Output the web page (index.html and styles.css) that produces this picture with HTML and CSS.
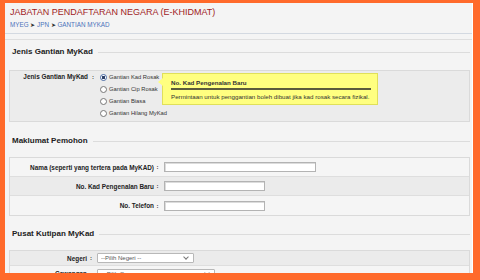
FILE: index.html
```html
<!DOCTYPE html>
<html lang="ms">
<head>
  <meta charset="UTF-8">
  <meta name="viewport" content="width=device-width, initial-scale=1.0">
  <title>Gantian MyKad - JPN</title>
  <link rel="stylesheet" href="styles.css">
</head>
<body>
  <div class="page">
    <div class="header">
      <h1 class="title">JABATAN PENDAFTARAN NEGARA (E-KHIDMAT)</h1>
      <div class="crumbs">
        <a href="#">MYEG</a> <span class="sep">&#10148;</span>
        <a href="#">JPN</a> <span class="sep">&#10148;</span>
        <a href="#">GANTIAN MYKAD</a>
      </div>
    </div>
    <div class="subbar"></div>

    <div class="legend legend-type">Jenis Gantian MyKad</div>
    <div class="box box-type">
      <div class="row">
        <div class="label">Jenis Gantian MyKad</div>
        <div class="colon">:</div>
        <div class="options">
          <label class="option"><input type="radio" name="jenis" checked>Gantian Kad Rosak</label>
          <label class="option"><input type="radio" name="jenis">Gantian Cip Rosak</label>
          <label class="option"><input type="radio" name="jenis">Gantian Biasa</label>
          <label class="option"><input type="radio" name="jenis">Gantian Hilang MyKad</label>
        </div>
      </div>
      <div class="tip">
        <div class="tip-title">No. Kad Pengenalan Baru</div>
        <div class="tip-text">Permintaan untuk penggantian boleh dibuat jika kad rosak secara fizikal.</div>
      </div>
    </div>

    <div class="legend legend-person">Maklumat Pemohon</div>
    <div class="box box-person">
      <div class="row">
        <div class="label">Nama (seperti yang tertera pada MyKAD)</div>
        <div class="colon">:</div>
        <input class="text-input wide" type="text">
      </div>
      <div class="row alt">
        <div class="label">No. Kad Pengenalan Baru</div>
        <div class="colon">:</div>
        <input class="text-input" type="text">
      </div>
      <div class="row">
        <div class="label">No. Telefon</div>
        <div class="colon">:</div>
        <input class="text-input" type="text">
      </div>
    </div>

    <div class="legend legend-centre">Pusat Kutipan MyKad</div>
    <div class="box box-centre">
      <div class="row alt">
        <div class="label">Negeri</div>
        <div class="colon">:</div>
        <span class="select-wrap state">
          <select class="select"><option>--Pilih Negeri --</option></select>
        </span>
      </div>
      <div class="row">
        <div class="label">Cawangan</div>
        <div class="colon">:</div>
        <span class="select-wrap branch">
          <select class="select"><option>-- Pilih Cawangan --</option></select>
        </span>
      </div>
    </div>
  </div>
</body>
</html>
```

FILE: styles.css
```css
* {
  box-sizing: border-box;
}
body {
  margin: 0;
  background: #ff6a2b;
  font-family: "Liberation Sans", Arial, sans-serif;
  color: #333;
}
.page {
  margin: 3px 7px 0 5px;
  height: 270px;
  background: #f4f4f4;
  border-right: 1px solid #fff;
  overflow: hidden;
}
.header {
  padding: 4px 0 5px 5px;
  border-bottom: 1px solid #d3d9e1;
}
.title {
  margin: 0;
  font-size: 9px;
  line-height: 11px;
  font-weight: normal;
  color: #a01c24;
}
.crumbs {
  margin-top: 3px;
  font-size: 6.3px;
  line-height: 7px;
}
.crumbs a {
  color: #4b73bb;
  text-decoration: none;
}
.crumbs .sep {
  color: #333;
}
.subbar {
  height: 6px;
  border-bottom: 1px solid #dedede;
}
.legend {
  display: flex;
  align-items: center;
  margin: 0 2px 0 7px;
  font-size: 8px;
  line-height: 10px;
  font-weight: bold;
  color: #222;
}
.legend::after {
  content: "";
  flex: 1;
  height: 1px;
  margin-left: 5px;
  background: #dcdcdc;
}
.legend-type {
  margin-top: 7px;
}
.legend-person {
  margin-top: 14px;
}
.legend-centre {
  margin-top: 13px;
}
.box {
  position: relative;
  margin: 13px 2px 0 4px;
  border: 1px solid #dadada;
  background: #ececec;
  font-size: 6px;
}
.box-person,
.box-centre {
  margin-top: 11px;
  background: #f5f5f5;
}
.row {
  display: flex;
  align-items: center;
  border-bottom: 1px solid #dedede;
}
.row:last-child {
  border-bottom: none;
}
.row.alt {
  background: #ebebeb;
}
.label {
  text-align: right;
  font-size: 6.4px;
  font-weight: bold;
  color: #222;
}
.colon {
  text-align: center;
  font-weight: bold;
  color: #222;
}

/* jenis gantian */
.box-type {
  padding: 0 0 2px;
}
.box-type .row {
  align-items: flex-start;
  border-bottom: none;
}
.box-type .label {
  width: 78px;
  line-height: 12px;
}
.box-type .colon {
  width: 10px;
  line-height: 12px;
}
.options {
  padding-left: 2px;
  font-size: 5.8px;
}
.option {
  display: flex;
  align-items: center;
  height: 12px;
}
.option input {
  appearance: none;
  width: 7px;
  height: 7px;
  margin: 0 2px 0 0;
  border: 1px solid #777;
  border-radius: 50%;
  background: #fff;
}
.option input:checked {
  background: radial-gradient(circle, #2d3f66 0 1.4px, #fff 1.9px);
  border-color: #4a6aa5;
}
.tip {
  position: absolute;
  left: 152px;
  top: 2px;
  width: 216px;
  height: 32px;
  padding: 5px 6px 0 8px;
  background: #ffff80;
  border: 1px solid #e0e05a;
  color: #333;
  font-size: 6.2px;
}
.tip::before {
  content: "";
  position: absolute;
  left: -5px;
  top: 4px;
  border-top: 4px solid transparent;
  border-bottom: 4px solid transparent;
  border-right: 5px solid #ffff80;
}
.tip-title {
  font-weight: bold;
  line-height: 8px;
  padding-bottom: 1px;
  border-bottom: 2px solid #5b5b3c;
}
.tip-text {
  margin-top: 3px;
  line-height: 7px;
}

/* maklumat pemohon */
.box-person .row {
  height: 19px;
}
.box-person .label {
  width: 144px;
}
.box-person .colon {
  width: 7px;
}
.text-input {
  width: 101px;
  height: 10px;
  margin-left: 3px;
  padding: 0;
  border: 1px solid #b3b3b3;
  box-shadow: inset 1px 1px 0 #dcdcdc;
  background: #fff;
}
.text-input.wide {
  width: 152px;
}

/* pusat kutipan */
.box-centre .row {
  height: 15px;
}
.box-centre .label {
  width: 77px;
}
.box-centre .colon {
  width: 8px;
}
.select-wrap {
  position: relative;
  display: block;
  margin-left: 2px;
}
.select-wrap.state {
  width: 97px;
}
.select-wrap.branch {
  width: 118px;
}
.select {
  appearance: none;
  display: block;
  width: 100%;
  height: 10px;
  padding: 0 0 0 3px;
  border: 1px solid #b8b8b8;
  border-radius: 1px;
  background: #fff;
  font-family: "Liberation Sans", Arial, sans-serif;
  font-size: 6px;
  line-height: 8px;
  color: #555;
}
.select-wrap::after {
  content: "";
  position: absolute;
  right: 6px;
  top: 2px;
  width: 3px;
  height: 3px;
  border-right: 1px solid #777;
  border-bottom: 1px solid #777;
  transform: rotate(45deg);
}
```
